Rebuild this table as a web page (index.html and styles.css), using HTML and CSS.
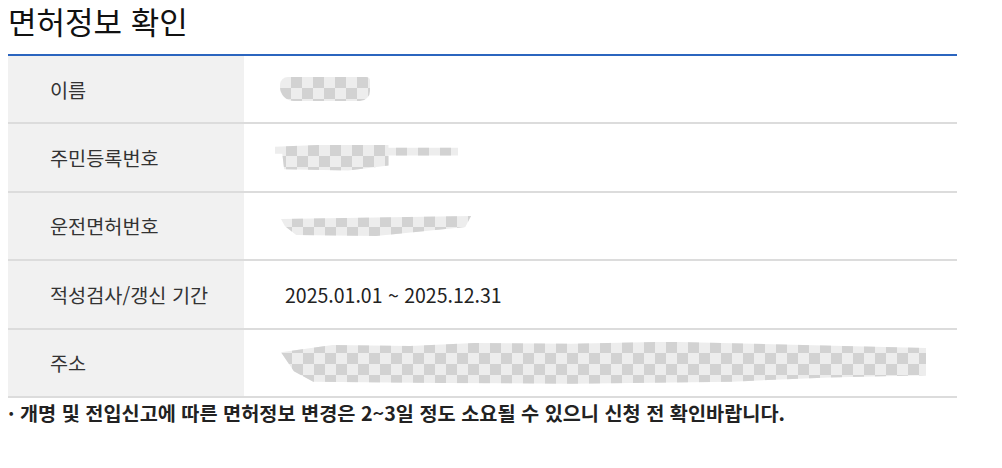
FILE: index.html
```html
<!DOCTYPE html>
<html lang="ko">
<head>
<meta charset="utf-8">
<link rel="stylesheet" href="styles.css">
</head>
<body>
<h1 class="title">면허정보 확인</h1>
<div class="info">
  <div class="row">
    <div class="label">이름</div>
    <div class="value"><span class="blob blob-name"></span></div>
  </div>
  <div class="row">
    <div class="label">주민등록번호</div>
    <div class="value"><span class="blob blob-rrn"></span></div>
  </div>
  <div class="row">
    <div class="label">운전면허번호</div>
    <div class="value"><span class="blob blob-lic"></span></div>
  </div>
  <div class="row">
    <div class="label">적성검사/갱신 기간</div>
    <div class="value date">2025.01.01 ~ 2025.12.31</div>
  </div>
  <div class="row">
    <div class="label">주소</div>
    <div class="value"><span class="blob blob-addr"></span></div>
  </div>
</div>
<p class="note">· 개명 및 전입신고에 따른 면허정보 변경은 2~3일 정도 소요될 수 있으니 신청 전 확인바랍니다.</p>
</body>
</html>
```

FILE: styles.css
```css
html, body {
  margin: 0;
  padding: 0;
  background: #fff;
}
body {
  padding: 0 45px 0 8px;
  font-family: "Noto Sans CJK KR", "Noto Sans", sans-serif;
  color: #222;
}
.title {
  margin: 0;
  height: 54px;
  font-size: 31px;
  font-weight: 400;
  line-height: 42px;
  color: #111;
}
.info {
  border-top: 2px solid #2b65bf;
}
.row {
  display: grid;
  grid-template-columns: 236px 1fr;
  height: 68.4px;
  box-sizing: border-box;
  border-bottom: 2px solid #dcdcdc;
}
.label {
  background: #f1f1f1;
  display: flex;
  align-items: center;
  padding-left: 42px;
  font-size: 19.7px;
  color: #333;
}
.value {
  display: flex;
  align-items: center;
  padding-left: 36px;
  font-size: 19px;
  color: #222;
}
.date {
  padding-left: 41px;
  font-size: 19.5px;
}
.blob {
  display: block;
  background-color: #ededed;
  background-image:
    linear-gradient(45deg, #d2d2d2 25%, transparent 25%, transparent 75%, #d2d2d2 75%),
    linear-gradient(45deg, #d2d2d2 25%, transparent 25%, transparent 75%, #d2d2d2 75%);
  background-size: 22px 22px;
  background-position: 0 0, 11px 11px;
}
.blob-name {
  width: 90px;
  height: 24px;
  border-radius: 8px 4px 10px 14px;
}
.blob-rrn {
  width: 183px;
  height: 26px;
  margin-left: -5px;
  clip-path: polygon(0 8%, 30% 0, 62% 0, 62% 12%, 100% 12%, 100% 42%, 62% 42%, 62% 80%, 40% 100%, 5% 95%, 4% 35%, 0 35%);
}
.blob-lic {
  width: 190px;
  height: 20px;
  margin-left: 1px;
  clip-path: polygon(0 15%, 100% 0, 97% 55%, 50% 100%, 8% 95%, 2% 50%);
}
.blob-addr {
  width: 645px;
  height: 42px;
  margin-left: 1px;
  clip-path: polygon(0 25%, 8% 8%, 20% 10%, 30% 3%, 45% 5%, 60% 0, 100% 15%, 100% 80%, 85% 85%, 70% 95%, 45% 100%, 25% 98%, 5% 95%, 2% 70%);
}
.note {
  margin: 2px 0 0;
  font-size: 19.7px;
  font-weight: 700;
  color: #222;
  line-height: 26px;
}
```
